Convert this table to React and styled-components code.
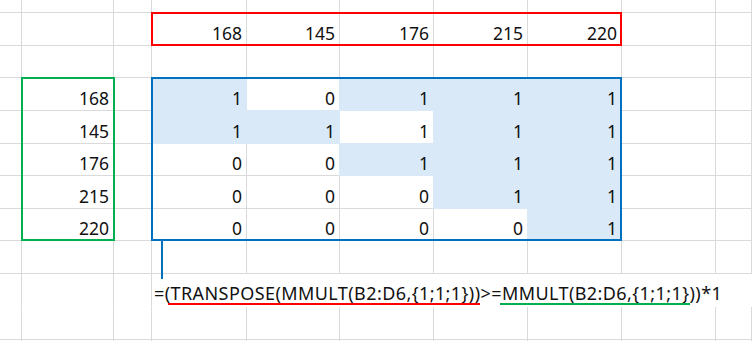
import React from "react";
import styled, { createGlobalStyle } from "styled-components";

const GRID = "#dadada";
const FILL = "#dae9f8";

const Global = createGlobalStyle`
  html, body { margin: 0; padding: 0; background: #fff; overflow: hidden; }
  body { font-family: "Noto Sans", "Open Sans", sans-serif; color: #111; }
`;

const Sheet = styled.div`
  display: grid;
  grid-template-columns: 22px 92px 38px 95px 93px 94px 94px 94px 94px 1fr;
  grid-template-rows: 13px 33px 32px 33px 33px 32px 33px 32px 33px 33px 33px 1fr;
  width: 752px;
  height: 341px;
  overflow: hidden;
  background: #fff;
`;

const Cell = styled.div`
  grid-row: ${(p) => p.$r + 1};
  grid-column: ${(p) => p.$c + 1};
  box-sizing: border-box;
  display: flex;
  align-items: flex-end;
  justify-content: flex-end;
  padding: 0 4px 1.5px 0;
  font-size: 17.5px;
  line-height: 22px;
  border-right: 1px solid ${(p) => (p.$fill ? FILL : p.$noRight ? "transparent" : GRID)};
  border-bottom: 1px solid ${(p) => (p.$fill ? FILL : p.$noBottom ? "transparent" : GRID)};
  background: ${(p) => (p.$fill ? FILL : "transparent")};
  box-shadow: ${(p) =>
    p.$fill ? `-1px 0 0 ${FILL}, 0 -1px 0 ${FILL}, -1px -1px 0 ${FILL}` : "none"};
`;

const FormulaCell = styled.div`
  grid-row: 10;
  grid-column: 4;
  box-sizing: border-box;
  display: flex;
  align-items: flex-end;
  padding: 0 0 2px 2px;
  position: relative;
  z-index: 3;
  white-space: nowrap;
  overflow: visible;
  font-size: 18px;
  line-height: 24px;
  letter-spacing: 0.42px;
  color: #111;
`;

const Marked = styled.span`
  position: relative;
  &::after {
    content: "";
    position: absolute;
    left: ${(p) => p.$left}px;
    right: ${(p) => p.$right}px;
    bottom: 0px;
    height: 2px;
    background: ${(p) => p.$color};
  }
`;

const Frame = styled.div`
  grid-row: ${(p) => p.$row};
  grid-column: ${(p) => p.$col};
  box-sizing: border-box;
  border: 2px solid ${(p) => p.$color};
  margin: -1px ${(p) => (p.$wide ? -1 : 0)}px 0 -1px;
  position: relative;
  z-index: 2;
  pointer-events: none;
`;

const Tail = styled.div`
  position: absolute;
  left: 8px;
  top: calc(100% + 2px);
  width: 2px;
  height: 38px;
  background: #0070c0;
`;

const top = [168, 145, 176, 215, 220];
const left = [168, 145, 176, 215, 220];
const matrix = [
  [1, 0, 1, 1, 1],
  [1, 1, 1, 1, 1],
  [0, 0, 1, 1, 1],
  [0, 0, 0, 1, 1],
  [0, 0, 0, 0, 1],
];
const fills = [
  [1, 0, 1, 1, 1],
  [1, 1, 0, 1, 1],
  [0, 0, 1, 1, 1],
  [0, 0, 0, 1, 1],
  [0, 0, 0, 0, 1],
];

const ROWS = 12;
const COLS = 10;

function cellInfo(r, c) {
  let text = null;
  let fill = false;
  if (r === 1 && c >= 3 && c <= 7) text = top[c - 3];
  if (r >= 3 && r <= 7) {
    if (c === 1) text = left[r - 3];
    if (c >= 3 && c <= 7) {
      text = matrix[r - 3][c - 3];
      fill = !!fills[r - 3][c - 3];
    }
  }
  const noRight = r === 9 && c >= 3;
  const noBottom = r === 9;
  return { text, fill, noRight, noBottom };
}

export default function App() {
  const cells = [];
  for (let r = 0; r < ROWS; r++) {
    for (let c = 0; c < COLS; c++) {
      const { text, fill, noRight, noBottom } = cellInfo(r, c);
      cells.push(
        <Cell key={`${r}-${c}`} $r={r} $c={c} $fill={fill} $noRight={noRight} $noBottom={noBottom}>
          {text}
        </Cell>
      );
    }
  }
  return (
    <>
      <Global />
      <Sheet>
        {cells}
        <Frame $row="2" $col="4 / span 5" $color="#ff0000" />
        <Frame $row="4 / span 5" $col="2" $color="#00b050" $wide />
        <Frame $row="4 / span 5" $col="4 / span 5" $color="#0070c0">
          <Tail />
        </Frame>
        <FormulaCell>
          =(
          <Marked $color="#ff0000" $left={-3} $right={0}>
            TRANSPOSE(MMULT(B2:D6,{"{"}1;1;1{"}"}))
          </Marked>
          &gt;=
          <Marked $color="#00b050" $left={-2} $right={0}>
            MMULT(B2:D6,{"{"}1;1;1{"}"}
          </Marked>
          ))*1
        </FormulaCell>
      </Sheet>
    </>
  );
}
